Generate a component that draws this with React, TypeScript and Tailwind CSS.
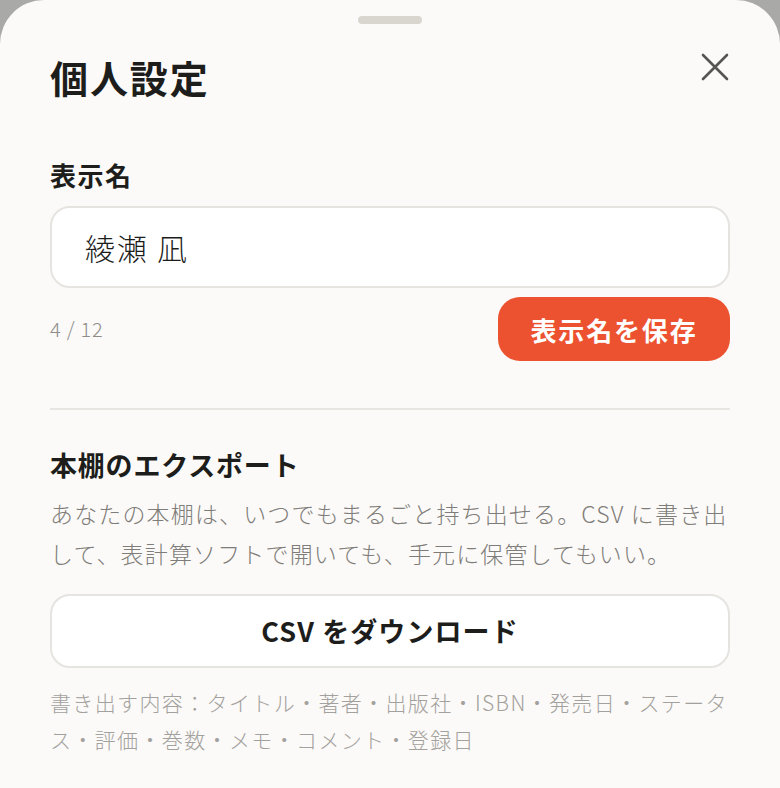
import React from "react";

export default function App() {
  const font = { fontFamily: '"Noto Sans CJK JP", "Noto Sans", sans-serif' };
  return (
    <div className="w-[780px] h-[788px] bg-[#a9a9a7] overflow-hidden" style={font}>
      <div className="w-full h-full bg-[#fbfaf8] rounded-t-[44px] flex flex-col px-[50px] relative">
        <div className="flex justify-center pt-[16px]">
          <div className="w-[64px] h-[8px] rounded-full bg-[#d9d6d0]" />
        </div>
        <div className="flex items-start justify-between mt-[29px]">
          <h1 className="text-[38px] leading-[48px] font-bold text-[#1d1d1b] tracking-[0.05em]">個人設定</h1>
          <button className="mt-[-3px] mr-[-2px] w-[34px] h-[34px] flex items-center justify-center text-[#555]">
            <svg width="30" height="30" viewBox="0 0 30 30" fill="none" stroke="currentColor" strokeWidth="2.6" strokeLinecap="round">
              <path d="M3 3L27 27M27 3L3 27" />
            </svg>
          </button>
        </div>
        <div className="mt-[58px] text-[26px] leading-[32px] font-bold text-[#1d1d1b] tracking-[0.06em]">表示名</div>
        <div className="mt-[15px] h-[82px] rounded-[20px] border-2 border-[#e6e4e0] bg-white flex items-center px-[33px]">
          <span className="text-[30px] font-light text-[#1d1d1b] tracking-[0.06em]">綾瀬 凪</span>
        </div>
        <div className="mt-[9px] flex items-center justify-between">
          <span className="text-[20px] font-light text-[#8f8d89] tracking-[0.04em]">4 / 12</span>
          <button className="w-[232px] h-[64px] rounded-[22px] bg-[#ec522f] text-white text-[26px] font-bold tracking-[0.07em]">
            表示名を保存
          </button>
        </div>
        <div className="mt-[47px] h-[2px] bg-[#e8e6e2]" />
        <div className="mt-[37px] text-[27px] leading-[36px] font-bold text-[#1d1d1b] tracking-[0.03em]">本棚のエクスポート</div>
        <p className="mt-[10px] text-[23px] leading-[40px] font-light text-[#7f7d79] tracking-[0.05em]">
          あなたの本棚は、いつでもまるごと持ち出せる。CSV に書き出して、表計算ソフトで開いても、手元に保管してもいい。
        </p>
        <button className="mt-[21px] h-[74px] rounded-[20px] border-2 border-[#e6e4e0] bg-white text-[27px] font-bold text-[#1d1d1b] tracking-[0.04em]">
          CSV をダウンロード
        </button>
        <p className="mt-[16px] text-[21px] leading-[37px] font-light text-[#a3a19d] tracking-[0.065em]">
          書き出す内容：タイトル・著者・出版社・ISBN・発売日・ステータ
          <br />
          ス・評価・巻数・メモ・コメント・登録日
        </p>
      </div>
    </div>
  );
}
